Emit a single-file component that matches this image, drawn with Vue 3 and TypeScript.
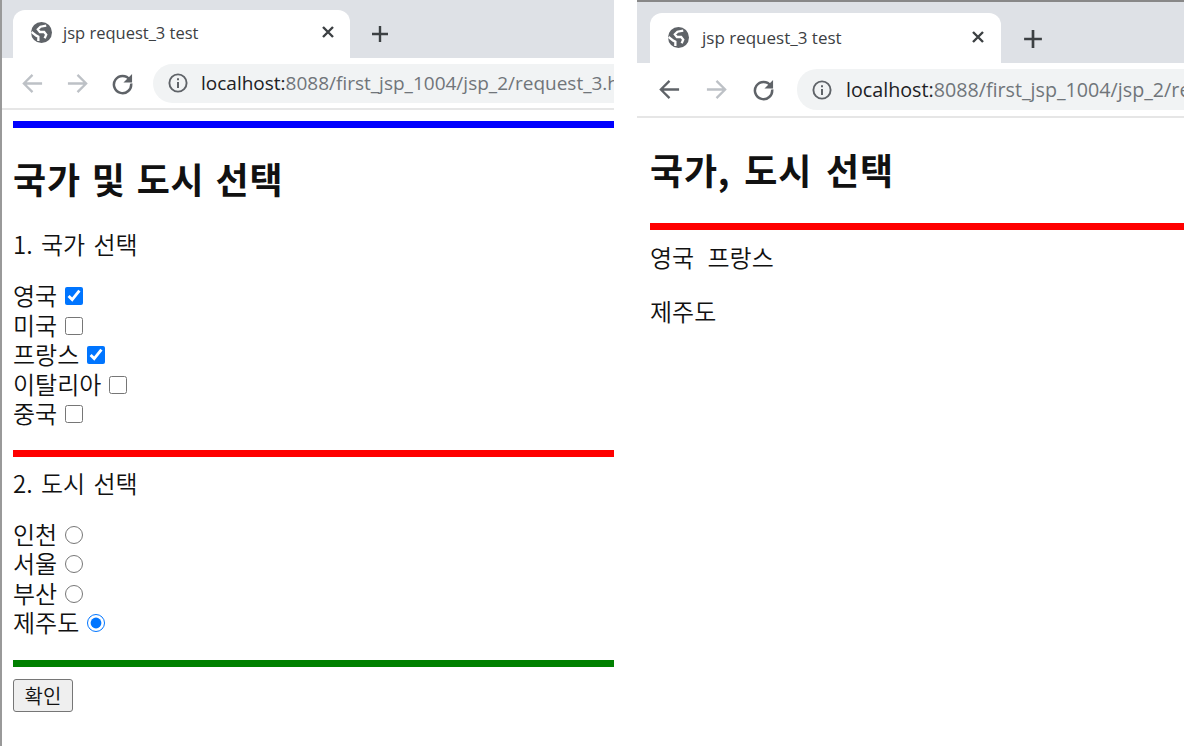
<script setup lang="ts">
interface Pane {
  id: string
  address: string
  backActive: boolean
}

const panes: Pane[] = [
  { id: 'left', address: '8088/first_jsp_1004/jsp_2/request_3.html', backActive: false },
  { id: 'right', address: '8088/first_jsp_1004/jsp_2/request_3.jsp', backActive: true },
]

const countries = [
  { name: '영국', checked: true },
  { name: '미국', checked: false },
  { name: '프랑스', checked: true },
  { name: '이탈리아', checked: false },
  { name: '중국', checked: false },
]

const cities = [
  { name: '인천', checked: false },
  { name: '서울', checked: false },
  { name: '부산', checked: false },
  { name: '제주도', checked: true },
]
</script>

<template>
  <div class="screen">
    <section v-for="pane in panes" :key="pane.id" class="pane" :class="pane.id">
      <div class="tabstrip">
        <div class="tab">
          <svg class="globe" viewBox="0 0 20 20">
            <circle cx="10" cy="10" r="10" fill="#5f6368" />
            <path d="M14.5 3.5L9 4.5 6.5 7l2 2.5h4l2 2.5-1.5 3.5M0.5 9.5L5 13l2 1v4" fill="none" stroke="#fff" stroke-width="2.2" />
          </svg>
          <span class="tab-title">jsp request_3 test</span>
          <svg class="close" viewBox="0 0 14 14">
            <path d="M2 2l10 10M12 2L2 12" fill="none" stroke="#3c4043" stroke-width="2.4" />
          </svg>
        </div>
        <svg class="plus" viewBox="0 0 18 18">
          <path d="M9 1v16M1 9h16" fill="none" stroke="#3c4043" stroke-width="2.4" />
        </svg>
      </div>
      <div class="toolbar">
        <svg class="nav" viewBox="0 0 24 24">
          <path d="M22 12H4M12 3l-9 9 9 9" fill="none" :stroke="pane.backActive ? '#5f6368' : '#bdc1c6'" stroke-width="2.4" />
        </svg>
        <svg class="nav" viewBox="0 0 24 24">
          <path d="M2 12h18M12 3l9 9-9 9" fill="none" stroke="#bdc1c6" stroke-width="2.4" />
        </svg>
        <svg class="nav" viewBox="0 0 24 24">
          <path d="M19.5 8A9 9 0 1 0 21 12" fill="none" stroke="#5f6368" stroke-width="2.6" />
          <path d="M22 2v9h-9z" fill="#5f6368" />
        </svg>
        <div class="omnibox">
          <svg class="info" viewBox="0 0 20 20">
            <circle cx="10" cy="10" r="8.6" fill="none" stroke="#5f6368" stroke-width="1.9" />
            <path d="M9 9h2v6H9zM9 5.2h2v2H9z" fill="#5f6368" />
          </svg>
          <span class="url"><span class="host">localhost:</span>{{ pane.address }}</span>
        </div>
      </div>
      <div v-if="pane.id === 'left'" class="page">
        <hr class="rule blue" />
        <h1>국가 및 도시 선택</h1>
        <p>1. 국가 선택</p>
        <div class="options first">
          <label v-for="c in countries" :key="c.name" class="option">
            {{ c.name }} <input type="checkbox" :checked="c.checked" />
          </label>
        </div>
        <hr class="rule red" />
        <p class="second">2. 도시 선택</p>
        <div class="options">
          <label v-for="c in cities" :key="c.name" class="option">
            {{ c.name }} <input type="radio" name="city" :checked="c.checked" />
          </label>
        </div>
        <hr class="rule green" />
        <button type="button" class="confirm">확인</button>
      </div>
      <div v-else class="page">
        <h1>국가, 도시 선택</h1>
        <hr class="rule red" />
        <p>영국 프랑스</p>
        <p class="city">제주도</p>
      </div>
    </section>
  </div>
</template>

<style>
html,
body {
  margin: 0;
  background: #fff;
}
</style>

<style scoped>
.screen {
  display: flex;
  width: 1187px;
  height: 746px;
  overflow: hidden;
  background: #fff;
  font-family: "Noto Sans CJK KR", "Noto Sans", sans-serif;
  color: #111;
}

.pane {
  box-sizing: border-box;
  overflow: hidden;
  height: 746px;
}

.left {
  width: 614px;
  border-left: 2px solid #999;
}

.right {
  width: 547px;
  margin-left: 23px;
  border-top: 2px solid #888;
}

.tabstrip {
  display: flex;
  align-items: flex-end;
  background: #dee1e6;
  width: 100%;
}

.left .tabstrip {
  height: 58px;
}

.right .tabstrip {
  height: 61px;
}

.tab {
  display: flex;
  align-items: center;
  box-sizing: border-box;
  background: #fff;
  border-radius: 12px 12px 0 0;
}

.left .tab {
  width: 337px;
  height: 48px;
  margin-left: 11px;
  padding: 0 15px 4px 18px;
}

.right .tab {
  width: 351px;
  height: 50px;
  margin-left: 13px;
  padding: 0 16px 2px 18px;
}

.globe {
  width: 21px;
  height: 21px;
  flex: none;
}

.tab-title {
  flex: 1;
  margin-left: 11px;
  font: 16.5px "Open Sans", sans-serif;
  color: #3c4043;
  white-space: nowrap;
}

.right .tab-title {
  margin-left: 13px;
  font-size: 17px;
}

.close {
  width: 14px;
  height: 14px;
}

.plus {
  flex: none;
  width: 18px;
  height: 18px;
  margin: 0 0 15px 21px;
}

.right .plus {
  width: 20px;
  height: 20px;
  margin: 0 0 14px 22px;
}

.toolbar {
  display: flex;
  align-items: center;
  gap: 22px;
  background: #fff;
  border-bottom: 2px solid #e6e6e6;
  padding-left: 19px;
}

.left .toolbar {
  height: 50px;
}

.right .toolbar {
  height: 53px;
  gap: 24px;
  padding-left: 21px;
}

.nav {
  width: 23px;
  height: 23px;
  flex: none;
}

.omnibox {
  display: flex;
  align-items: center;
  flex: 1;
  min-width: 0;
  background: #f1f3f4;
  border-radius: 20px 0 0 20px;
  padding-left: 15px;
}

.left .omnibox {
  height: 39px;
  margin-left: -3px;
}

.right .omnibox {
  height: 41px;
  margin-left: -2px;
}

.info {
  width: 20px;
  height: 20px;
  flex: none;
}

.url {
  margin-left: 13px;
  font: 19px "Open Sans", sans-serif;
  color: #70757a;
  white-space: nowrap;
}

.right .url {
  margin-left: 14px;
  font-size: 19.7px;
}

.host {
  color: #202124;
}

.page {
  padding-left: 11px;
  font-size: 24px;
  font-weight: 350;
}

.right .page {
  padding-left: 13px;
}

.rule {
  border: 0;
  height: 7px;
  margin: 0;
}

.blue {
  background: #00f;
  margin-top: 11px;
}

.red {
  background: #f00;
}

.green {
  background: #008000;
}

h1 {
  margin: 0;
  font-size: 36px;
  font-weight: 700;
  line-height: 50px;
  letter-spacing: 0.8px;
  word-spacing: 2px;
}

.left h1 {
  margin-top: 25px;
}

.right h1 {
  margin-top: 26px;
  margin-bottom: 29px;
  word-spacing: 5px;
}

p {
  margin: 0;
  line-height: 30px;
}

.left p {
  margin-top: 26px;
  word-spacing: 3px;
}

.left .second {
  margin-top: 11px;
}

.right p {
  margin-top: 12px;
  word-spacing: 8px;
}

.right .city {
  margin-top: 24px;
}

.options {
  display: flex;
  flex-direction: column;
  align-items: flex-start;
  margin-top: 21px;
  margin-bottom: 23px;
}

.options.first {
  margin-bottom: 22px;
}

.option {
  height: 29.5px;
  line-height: 29.5px;
  white-space: pre;
  word-spacing: 2px;
}

.option input {
  margin: 0;
  vertical-align: 0;
}

input[type="checkbox"],
input[type="radio"] {
  width: 18px;
  height: 18px;
}

.confirm {
  box-sizing: border-box;
  display: block;
  width: 60px;
  height: 33px;
  margin-top: 12px;
  padding: 0;
  font: 350 20px "Noto Sans CJK KR", sans-serif;
  color: #111;
  background: #efefef;
  border: 1.5px solid #767676;
  border-radius: 3px;
}
</style>
